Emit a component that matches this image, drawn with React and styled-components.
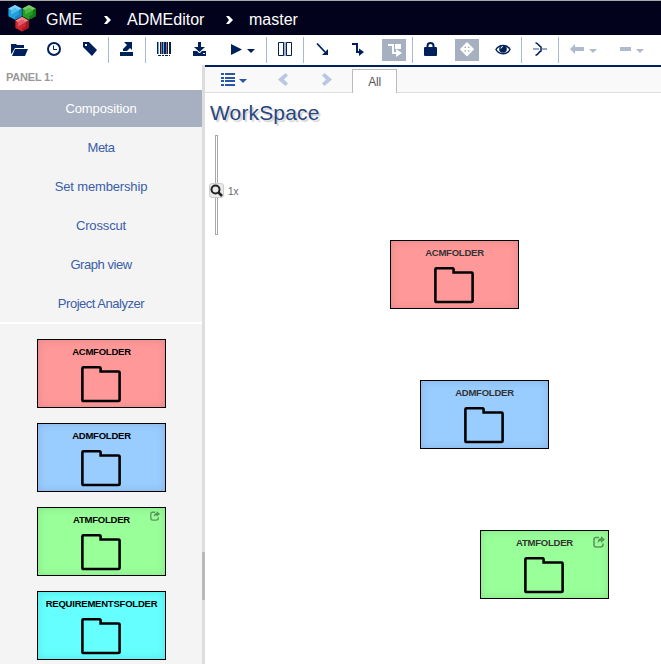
import React from 'react';
import styled, { createGlobalStyle } from 'styled-components';

const NAVY = '#00205b';

const GlobalStyle = createGlobalStyle`
  * { box-sizing: border-box; }
  body { margin: 0; background: #fff; font-family: Arial, "Liberation Sans", sans-serif; }
  svg { display: block; flex: none; }
`;

const Page = styled.div`
  width: 661px;
  height: 664px;
  display: flex;
  flex-direction: column;
  overflow: hidden;
  background: #fff;
`;

const Header = styled.header`
  height: 35px;
  flex: none;
  display: flex;
  align-items: center;
  padding: 3px 0 0 8px;
  border-top: 1px solid #a9a9a4;
  background: #02021c;
  color: #fff;
  font-size: 16px;
  line-height: 20px;
`;

const Crumb = styled.span`
  width: ${(p) => p.$width}px;
  margin-left: ${(p) => p.$gap}px;
  white-space: nowrap;
`;

const ChevronBox = styled.span`
  margin-left: ${(p) => p.$gap}px;
`;

const Toolbar = styled.div`
  height: 30px;
  flex: none;
  display: flex;
  background: #fff;
  color: ${NAVY};
`;

const ToolButton = styled.div`
  width: ${(p) => p.$width || 36}px;
  height: 30px;
  flex: none;
  display: flex;
  align-items: center;
  justify-content: center;
  color: ${(p) => (p.$disabled ? '#afbacd' : 'inherit')};
`;

const ToolFace = styled.div`
  height: 22px;
  width: ${(p) => (p.$wide ? 36 : 24)}px;
  display: flex;
  align-items: center;
  justify-content: center;
  gap: 4px;
  padding-bottom: 2px;
  background: ${(p) => (p.$active ? '#a6b0c0' : 'transparent')};
  color: ${(p) => (p.$active ? '#fff' : 'inherit')};
`;

const ToolCaret = styled.span`
  margin-top: 4px;
`;

const Separator = styled.div`
  width: 1px;
  height: 26px;
  margin-top: 2px;
  flex: none;
  background: #a9b8d4;
`;

const Body = styled.div`
  flex: 1;
  min-height: 0;
  display: flex;
`;

const Sidebar = styled.aside`
  width: 202px;
  flex: none;
  display: flex;
  flex-direction: column;
  background: #f4f4f4;
`;

const PanelTitle = styled.div`
  height: 25px;
  flex: none;
  padding: 6px 0 0 6px;
  background: #fff;
  color: #999;
  font-size: 11px;
  font-weight: bold;
  line-height: 13px;
  letter-spacing: -0.2px;
`;

const Menu = styled.nav`
  height: 234px;
  flex: none;
  display: flex;
  flex-direction: column;
  gap: 2px;
  border-bottom: 2px solid #fff;
`;

const MenuItem = styled.div`
  height: 37px;
  flex: none;
  line-height: 37px;
  text-align: center;
  font-size: 13px;
  letter-spacing: ${(p) => p.$tracking}px;
  background: ${(p) => (p.$active ? '#a6b0c0' : 'transparent')};
  color: ${(p) => (p.$active ? '#fff' : '#3a5da8')};
`;

const Parts = styled.div`
  flex: 1;
  min-height: 0;
  display: flex;
  flex-direction: column;
  align-items: center;
  gap: 15px;
  padding-top: 15px;
  padding-left: 1px;
  overflow: hidden;
`;

const Card = styled.div`
  position: relative;
  width: 129px;
  height: 69px;
  flex: none;
  display: flex;
  flex-direction: column;
  align-items: center;
  padding-top: 6px;
  border: 1px solid #000;
  background: ${(p) => p.$fill};
  box-shadow: inset 0 0 8px rgba(0, 0, 0, 0.12);
  color: ${(p) => (p.$muted ? '#333' : '#000')};
`;

const CardLabel = styled.div`
  height: 10px;
  margin-bottom: 9px;
  font-size: 9.5px;
  font-weight: bold;
  line-height: 11px;
  letter-spacing: -0.22px;
  white-space: nowrap;
`;

const LinkBadge = styled.span`
  position: absolute;
  top: ${(p) => (p.$large ? 5 : 3)}px;
  right: ${(p) => (p.$large ? 3 : 5)}px;
  color: #000;
  opacity: 0.4;
`;

const Splitter = styled.div`
  width: 3px;
  flex: none;
  padding-top: 487px;
  background: #ddd;
`;

const SplitterHandle = styled.div`
  height: 48px;
  background: #b9b9b9;
`;

const Main = styled.main`
  flex: 1;
  min-width: 0;
  display: flex;
  flex-direction: column;
  border-top: 2px solid ${NAVY};
  background: #fff;
`;

const TabBar = styled.div`
  height: 26px;
  flex: none;
  display: flex;
  border-bottom: 1px solid #ddd;
  background: #f9f9f9;
`;

const ViewControls = styled.div`
  width: 147px;
  flex: none;
  display: flex;
  align-items: center;
  padding: 0 0 0 16px;
  color: #2a57a5;
`;

const CaretSlot = styled.span`
  margin: 2px 0 0 4px;
`;

const ArrowSlot = styled.span`
  margin-left: ${(p) => p.$gap}px;
  color: #b9c7e2;
`;

const Tab = styled.div`
  width: 45px;
  height: 24px;
  margin: 2px 0 -1px;
  border: 1px solid #bbb;
  border-bottom: 0;
  background: #fff;
  color: #555;
  font-size: 12px;
  line-height: 24px;
  text-align: center;
  letter-spacing: -0.2px;
`;

const Canvas = styled.section`
  position: relative;
  flex: 1;
`;

const Title = styled.h1`
  margin: 0;
  padding: 8px 0 0 5px;
  height: 42px;
  color: #28457c;
  font-size: 21px;
  font-weight: normal;
  line-height: 24px;
  letter-spacing: 0.15px;
  text-shadow: 2px 2px 1px #d2d2d2;
`;

const Zoom = styled.div`
  height: 100px;
  display: flex;
  align-items: center;
  padding-left: 4px;
`;

const ZoomTrack = styled.div`
  width: 15px;
  height: 100px;
  display: flex;
  flex-direction: column;
  align-items: center;
`;

const TrackPart = styled.div`
  width: 3px;
  height: ${(p) => p.$height}px;
  border: 1px solid #aaa;
  border-${(p) => p.$open}: 0;
  background: #fff;
`;

const ZoomThumb = styled.div`
  width: 15px;
  height: 15px;
  display: flex;
  align-items: center;
  justify-content: center;
  border: 1px solid #ccc;
  border-radius: 3px;
  background: #eaeaea;
  color: #222;
`;

const ZoomLabel = styled.span`
  margin: 13px 0 0 4px;
  color: #666;
  font-size: 10px;
  line-height: 12px;
`;

const Node = styled.div`
  position: absolute;
  left: ${(p) => p.$x}px;
  top: ${(p) => p.$y}px;
`;

const Icon = ({ w = 16, h = 16, children }) => (
  <svg width={w} height={h} viewBox={`0 0 ${w} ${h}`} fill="currentColor">{children}</svg>
);

const Caret = () => <Icon w={8} h={4}><path d="M0 0h8L4 4z" /></Icon>;

const Hex = ({ cx, cy, base, light, dark }) => (
  <g transform={`translate(${cx} ${cy})`}>
    <path d="M0-7.4L6.6-3.8V3.8L0 7.4L-6.6 3.8V-3.8Z" fill={base} />
    <path d="M0-7.4L6.6-3.8L3.8-2.2L0-4.4L-3.8-2.2L-6.6-3.8Z" fill={light} />
    <path d="M6.6-3.8V3.8L0 7.4V4.4L3.8 2.2V-2.2Z" fill={dark} />
    <path d="M-3.8-2.2L0-4.4L3.8-2.2L-3.8 2.2Z" fill={light} opacity=".55" />
  </g>
);

const Logo = () => (
  <svg width="29" height="29" viewBox="0 0 29 29">
    <Hex cx={7} cy={7.4} base="#20a0dc" light="#7dd3f5" dark="#1a86c4" />
    <Hex cx={21} cy={7.4} base="#249e25" light="#76cb64" dark="#157a16" />
    <Hex cx={14} cy={19.2} base="#ce2835" light="#ee858a" dark="#a51822" />
  </svg>
);

const Chevron = () => (
  <Icon w={7} h={8}><path d="M0 0h3l4 4-4 4H0l3-4z" /></Icon>
);

const FolderOpen = () => (
  <Icon w={20}><path d="M3 13V3h5l1 1h7v3H7L4 12z" /><path d="M7 8h13l-3 7H4z" /></Icon>
);
const Clock = () => (
  <Icon><circle cx="8" cy="8" r="6" fill="none" stroke="currentColor" strokeWidth="2" /><path d="M7.5 4.5V8.5H11" fill="none" stroke="currentColor" /></Icon>
);
const Tag = () => (
  <Icon><path fillRule="evenodd" d="M1 1h6l8 8-5 6-9-9zM3 3v2h2V3z" /></Icon>
);
const Export = () => (
  <Icon><path d="M1 11h13v4H1zM5 1h8v8l-2-2-3 3H4V8l4-4z" /></Icon>
);
const Barcode = () => (
  <Icon>
    <path d="M1 1h1v12H1zM4 1h1v12H4zM6 1h1v12H6zM8 1h2v12H8zM11 1h1v12h-1zM13 1h2v12h-2z" />
    <path d="M2 1h1v12H2zM7 1h1v12H7z" fill="#66a7dd" />
    <path d="M5 1h1v12H5zM10 1h1v12h-1z" fill="#b56f4c" />
    <path d="M2 14h3v1H2zM6 14h2v1H6zM9 14h3v1H9zM13 14h1v1h-1z" />
  </Icon>
);
const Download = () => (
  <Icon><path d="M6 1h3v5h4L7.5 11 2 6h4z" /><path fillRule="evenodd" d="M1 10h4l2 2h1l2-2h4v5H1zM11 12v1h2v-1z" /></Icon>
);
const Play = () => <Icon w={14}><path d="M2 3l11 5.5L2 14z" /></Icon>;
const Columns = () => (
  <Icon><path d="M6 1h4v14H6z" opacity=".35" /><g fill="none" stroke="currentColor"><path d="M1.5 1.5h5v13h-5zM9.5 1.5h5v13h-5z" /></g></Icon>
);
const Diagonal = () => (
  <Icon><path d="M3 2.5L11 11" stroke="currentColor" strokeWidth="1.8" /><path d="M14 14H8l6-6z" /></Icon>
);
const Elbow = () => (
  <Icon><path d="M2 3h5v8h3" fill="none" stroke="currentColor" strokeWidth="2" /><path d="M9 7.5l5 3.5-5 4z" /></Icon>
);
const ElbowBox = () => (
  <Icon><path d="M2 4h5v8h3" fill="none" stroke="currentColor" strokeWidth="2" /><path d="M9 3h6v5H9zM10 8l6 4-6 4z" /></Icon>
);
const Lock = () => (
  <Icon><path d="M4.5 7V5c0-4 6-4 6 0v2" fill="none" stroke="currentColor" strokeWidth="2" /><rect x="1" y="6" width="13" height="9" rx="1" /></Icon>
);
const Move = () => (
  <Icon>
    <path fillRule="evenodd" d="M8 1l7.2 7.2L8 15.4L.8 8.2zM5.5 5.5v1.5h1.5v-1.5zM9 5.5v1.5h1.5v-1.5zM5.5 9.3v1.5h1.5v-1.5zM9 9.3v1.5h1.5v-1.5z" />
  </Icon>
);
const Eye = () => (
  <Icon><path d="M1 8.5C4 3 12 3 15 8.5C12 14 4 14 1 8.5Z" fill="none" stroke="currentColor" strokeWidth="1.5" /><circle cx="8" cy="8" r="3.8" /><path d="M6 7.5q0-2 2-2" fill="none" stroke="#fff" /></Icon>
);
const Crossing = () => (
  <Icon><path d="M1 8h6M10 8h5" stroke="#98a8c4" strokeWidth="2" /><path d="M3.5 1.8C6 2 6.5 5 9 6V10C6.5 11 6 14 3.5 14.2" fill="none" stroke="currentColor" strokeWidth="1.5" /></Icon>
);
const Back = () => <Icon><path d="M1 8l5-5v3h9v4H6v3z" /></Icon>;
const Minus = () => <Icon w={14}><path d="M2 6h11v4H2z" /></Icon>;

const ListIcon = () => (
  <Icon w={14} h={13}><path d="M0 0h3v2H0zM4 0h10v2H4zM0 4h3v2H0zM4 4h10v2H4zM0 7h3v2H0zM4 7h10v2H4zM0 11h3v2H0zM4 11h10v2H4z" /></Icon>
);
const NavChevron = ({ flip }) => (
  <Icon w={10} h={13}><path d={flip ? 'M0 2.5L2.5 0L10 6.5L2.5 13L0 10.5L4 6.5Z' : 'M10 2.5L7.5 0L0 6.5L7.5 13L10 10.5L6 6.5Z'} /></Icon>
);
const Magnifier = () => (
  <Icon w={13} h={13}><circle cx="5.5" cy="5.5" r="4" fill="none" stroke="currentColor" strokeWidth="2" /><path d="M8.5 8.5L12 12" stroke="currentColor" strokeWidth="2.5" /></Icon>
);
const Share = ({ size }) => (
  <svg width={size} height={size} viewBox="0 0 12 12" fill="currentColor">
    <path d="M6 1.5H3Q1 1.5 1 3.5V8.5Q1 11 3 11H7.5Q10 11 10 8.5V7.5" fill="none" stroke="currentColor" strokeWidth="1.6" />
    <path d="M8 0l4 3.5L8 7V5Q6 5 4.5 7Q4.5 2.5 8 2z" />
  </svg>
);
const FolderShape = () => (
  <svg width="41" height="39" viewBox="0 0 41 39">
    <path d="M2.5 2.2H18.5Q19.6 2.2 19.6 3.5V6.5H37.5Q38.6 6.5 38.6 7.6V34.9Q38.6 36 37.5 36H2.5Q1.4 36 1.4 34.9V3.3Q1.4 2.2 2.5 2.2Z" fill="none" stroke="#000" strokeWidth="2.6" />
  </svg>
);

const TOOLS = [
  { icon: FolderOpen }, { icon: Clock }, { icon: Tag }, 'sep',
  { icon: Export }, 'sep',
  { icon: Barcode }, { icon: Download }, { icon: Play, menu: true }, 'sep',
  { icon: Columns }, 'sep',
  { icon: Diagonal }, { icon: Elbow }, { icon: ElbowBox, active: true }, 'sep',
  { icon: Lock }, { icon: Move, active: true }, { icon: Eye }, 'sep',
  { icon: Crossing }, 'sep',
  { icon: Back, menu: true, disabled: true }, { icon: Minus, menu: true, disabled: true },
];

const VIEWS = [
  { name: 'Composition', tracking: -0.1 },
  { name: 'Meta', tracking: -0.5 },
  { name: 'Set membership', tracking: -0.15 },
  { name: 'Crosscut', tracking: -0.15 },
  { name: 'Graph view', tracking: -0.45 },
  { name: 'Project Analyzer', tracking: -0.48 },
];

const PARTS = [
  { name: 'ACMFOLDER', fill: '#ff9999' },
  { name: 'ADMFOLDER', fill: '#99ccff' },
  { name: 'ATMFOLDER', fill: '#99ff99', linked: true },
  { name: 'REQUIREMENTSFOLDER', fill: '#66ffff' },
];

const NODES = [
  { part: PARTS[0], x: 185, y: 147 },
  { part: PARTS[1], x: 215, y: 287 },
  { part: PARTS[2], x: 275, y: 437 },
];

const FolderCard = ({ part, muted }) => (
  <Card $fill={part.fill} $muted={muted}>
    <CardLabel>{part.name}</CardLabel>
    <FolderShape />
    {part.linked && <LinkBadge $large={muted}><Share size={muted ? 12 : 10} /></LinkBadge>}
  </Card>
);

export default function App() {
  return (
    <Page>
      <GlobalStyle />
      <Header>
        <Logo />
        <Crumb $gap={9} $width={36}>GME</Crumb>
        <ChevronBox $gap={22}><Chevron /></ChevronBox>
        <Crumb $gap={16} $width={78}>ADMEditor</Crumb>
        <ChevronBox $gap={21}><Chevron /></ChevronBox>
        <Crumb $gap={16} $width={50}>master</Crumb>
      </Header>
      <Toolbar>
        {TOOLS.map((tool, i) => {
          if (tool === 'sep') return <Separator key={i} />;
          const Glyph = tool.icon;
          return (
            <ToolButton key={i} $width={tool.menu ? 48 : 36} $disabled={tool.disabled}>
              <ToolFace $active={tool.active} $wide={tool.menu}>
                <Glyph />
                {tool.menu && <ToolCaret><Caret /></ToolCaret>}
              </ToolFace>
            </ToolButton>
          );
        })}
      </Toolbar>
      <Body>
        <Sidebar>
          <PanelTitle>PANEL 1:</PanelTitle>
          <Menu>
            {VIEWS.map((view, i) => (
              <MenuItem key={view.name} $active={i === 0} $tracking={view.tracking}>{view.name}</MenuItem>
            ))}
          </Menu>
          <Parts>
            {PARTS.map((part) => <FolderCard key={part.name} part={part} />)}
          </Parts>
        </Sidebar>
        <Splitter><SplitterHandle /></Splitter>
        <Main>
          <TabBar>
            <ViewControls>
              <ListIcon />
              <CaretSlot><Caret /></CaretSlot>
              <ArrowSlot $gap={31}><NavChevron /></ArrowSlot>
              <ArrowSlot $gap={34}><NavChevron flip /></ArrowSlot>
            </ViewControls>
            <Tab>All</Tab>
          </TabBar>
          <Canvas>
            <Title>WorkSpace</Title>
            <Zoom>
              <ZoomTrack>
                <TrackPart $height={48} $open="bottom" />
                <ZoomThumb><Magnifier /></ZoomThumb>
                <TrackPart $height={37} $open="top" />
              </ZoomTrack>
              <ZoomLabel>1x</ZoomLabel>
            </Zoom>
            {NODES.map(({ part, x, y }) => (
              <Node key={part.name} $x={x} $y={y}><FolderCard part={part} muted /></Node>
            ))}
          </Canvas>
        </Main>
      </Body>
    </Page>
  );
}
